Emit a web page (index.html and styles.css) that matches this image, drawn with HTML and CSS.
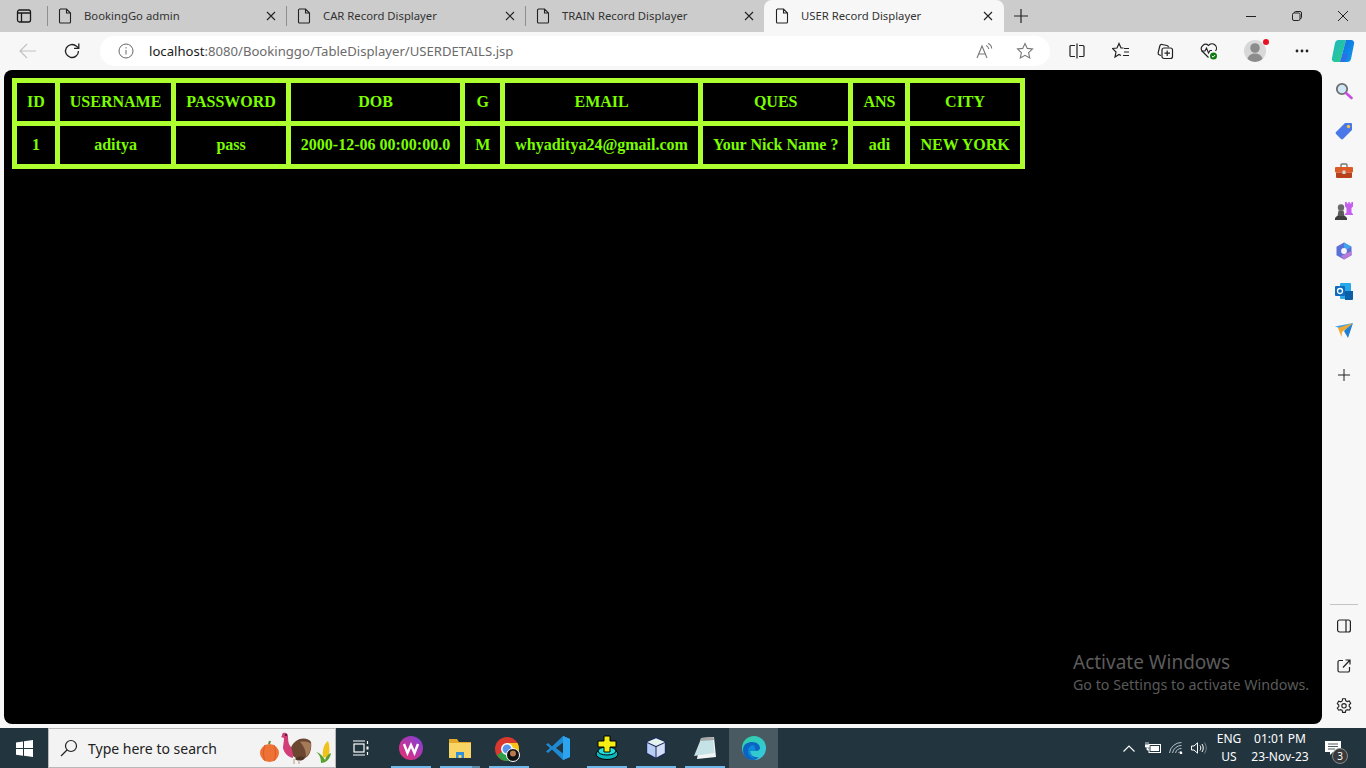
FILE: index.html
```html
<!DOCTYPE html>
<html>
<head>
<title>USER Record Displayer</title>
<meta name="viewport" content="width=device-width, initial-scale=1.0">
<link rel="stylesheet" href="styles.css">
</head>
<body>

<!-- tab strip -->
<div class="tabstrip">
  <div class="strip-toggle">
    <svg width="16" height="16" viewBox="0 0 16 16" fill="none" stroke="#1a1a1a" stroke-width="1.3"><rect x="1.5" y="2" width="13" height="12" rx="2"/><path d="M5.5 5v9M1.5 5h13" /></svg>
  </div>
  <div class="tab-sep"></div>
  <div class="tab">
    <svg class="doc" width="14" height="16" viewBox="0 0 14 16" fill="none" stroke="#222" stroke-width="1.1"><path d="M2 1h6.5L12.500 5v9a1 1 0 0 1-1 1h-9a1 1 0 0 1-1-1V2a1 1 0 0 1 1-1zM8.500 1v4h4"/></svg>
    <span class="tab-title">BookingGo admin</span>
    <span class="tab-close"><svg width="10" height="10" viewBox="0 0 10 10" stroke="#222" stroke-width="1.100"><path d="M1 1l8 8M9 1l-8 8"/></svg></span>
  </div>
  <div class="tab-sep"></div>
  <div class="tab">
    <svg class="doc" width="14" height="16" viewBox="0 0 14 16" fill="none" stroke="#222" stroke-width="1.1"><path d="M2 1h6.5L12.500 5v9a1 1 0 0 1-1 1h-9a1 1 0 0 1-1-1V2a1 1 0 0 1 1-1zM8.500 1v4h4"/></svg>
    <span class="tab-title">CAR Record Displayer</span>
    <span class="tab-close"><svg width="10" height="10" viewBox="0 0 10 10" stroke="#222" stroke-width="1.100"><path d="M1 1l8 8M9 1l-8 8"/></svg></span>
  </div>
  <div class="tab-sep"></div>
  <div class="tab">
    <svg class="doc" width="14" height="16" viewBox="0 0 14 16" fill="none" stroke="#222" stroke-width="1.1"><path d="M2 1h6.5L12.500 5v9a1 1 0 0 1-1 1h-9a1 1 0 0 1-1-1V2a1 1 0 0 1 1-1zM8.500 1v4h4"/></svg>
    <span class="tab-title">TRAIN Record Displayer</span>
    <span class="tab-close"><svg width="10" height="10" viewBox="0 0 10 10" stroke="#222" stroke-width="1.100"><path d="M1 1l8 8M9 1l-8 8"/></svg></span>
  </div>
  <div class="tab active">
    <svg class="doc" width="14" height="16" viewBox="0 0 14 16" fill="none" stroke="#222" stroke-width="1.1"><path d="M2 1h6.5L12.500 5v9a1 1 0 0 1-1 1h-9a1 1 0 0 1-1-1V2a1 1 0 0 1 1-1zM8.500 1v4h4"/></svg>
    <span class="tab-title">USER Record Displayer</span>
    <span class="tab-close"><svg width="10" height="10" viewBox="0 0 10 10" stroke="#222" stroke-width="1.100"><path d="M1 1l8 8M9 1l-8 8"/></svg></span>
  </div>
  <div class="new-tab">
    <svg width="14" height="14" viewBox="0 0 14 14" stroke="#222" stroke-width="1.200"><path d="M7 0v14M0 7h14"/></svg>
  </div>
  <div class="win-controls">
    <span class="win-btn"><svg width="10" height="10" viewBox="0 0 10 10" stroke="#222"><path d="M0 5.500h10"/></svg></span>
    <span class="win-btn"><svg width="10" height="10" viewBox="0 0 10 10" fill="none" stroke="#222"><rect x="0.500" y="2" width="7.500" height="7.500" rx="1.500"/><path d="M2.500 2V1.500a1 1 0 0 1 1-1H8a1.500 1.500 0 0 1 1.500 1.500v4.500a1 1 0 0 1-1 1H8"/></svg></span>
    <span class="win-btn"><svg width="10" height="10" viewBox="0 0 10 10" stroke="#222"><path d="M0 0l10 10M10 0L0 10"/></svg></span>
  </div>
</div>

<!-- address bar -->
<div class="toolbar">
  <div class="nav-btn">
    <svg width="18" height="16" viewBox="0 0 18 16" fill="none" stroke="#c2c2c2" stroke-width="1.200"><path d="M17 8H1M8 1L1 8l7 7"/></svg>
  </div>
  <div class="nav-btn">
    <svg width="18" height="18" viewBox="0 0 18 18" fill="none" stroke="#222" stroke-width="1.300"><path d="M15.500 9a6.500 6.500 0 1 1-2-4.700L15.500 6"/><path d="M15.800 1.500V6.300H11"/></svg>
  </div>
  <div class="address">
    <svg class="info" width="16" height="16" viewBox="0 0 16 16" fill="none" stroke="#666"><circle cx="8" cy="8" r="7"/><path d="M8 7v4.500M8 4.200v1.300"/></svg>
    <span class="url"><span class="host">localhost</span>:8080/Bookinggo/TableDisplayer/USERDETAILS.jsp</span>
    <svg class="read" width="18" height="16" viewBox="0 0 18 16" fill="none" stroke="#777" stroke-width="1.100"><path d="M1 15L6 3l5 12M2.800 11h6.500M10 2.500c1.500.5 2.500 2 2.700 3.500M12 .5c2.200.7 3.500 2.800 3.700 5"/></svg>
    <svg class="fav" width="18" height="18" viewBox="0 0 18 18" fill="none" stroke="#777" stroke-width="1.100"><path d="M9 1.500l2.300 4.900 5.200.6-3.900 3.600 1.100 5.300L9 13.300l-4.700 2.600 1.100-5.300L1.500 7l5.200-.6z"/></svg>
  </div>
  <div class="tool-btn">
    <svg width="16" height="16" viewBox="0 0 16 16" fill="none" stroke="#222" stroke-width="1.200"><path d="M6 2.500H2a1 1 0 0 0-1 1v9a1 1 0 0 0 1 1h4M10 2.500h4a1 1 0 0 1 1 1v9a1 1 0 0 1-1 1h-4M8 0.500v15"/></svg>
  </div>
  <div class="tool-btn">
    <svg width="18" height="18" viewBox="0 0 18 18" fill="none" stroke="#222" stroke-width="1.200"><path d="M11.500 6H9L7 1.500 5 6l-4.500.5L4 10l-1 5 4-2.500 2 1"/><path d="M12 6.500h5M12 10h5M11 13.500h6"/></svg>
  </div>
  <div class="tool-btn">
    <svg width="18" height="18" viewBox="0 0 18 18" fill="none" stroke="#222" stroke-width="1.200"><path d="M5 13.500l-1.500-.5a2 2 0 0 1-1.300-2.400L3.800 4A2 2 0 0 1 6 2.500l5 1a2 2 0 0 1 1.500 1.800"/><rect x="6" y="6" width="10.500" height="10.500" rx="2"/><path d="M11.200 8.500v5.500M8.500 11.200H14"/></svg>
  </div>
  <div class="tool-btn">
    <svg width="20" height="20" viewBox="0 0 20 20" fill="none"><path d="M9.500 16.500L3 10a4.300 4.300 0 0 1 6.500-5.500A4.300 4.300 0 0 1 16.500 10" stroke="#222" stroke-width="1.200"/><path d="M2.500 10H6l1.500-3 2 5 1.500-2.500h2" stroke="#222" stroke-width="1.100"/><circle cx="14.500" cy="15" r="3.500" fill="#107c10"/><path d="M12.900 15l1.200 1.200 2-2.200" stroke="#fff"/></svg>
  </div>
  <div class="tool-btn avatar-btn">
    <span class="avatar">
      <svg width="22" height="22" viewBox="0 0 22 22"><circle cx="11" cy="11" r="11" fill="#d8d8d8"/><circle cx="11" cy="8" r="4.800" fill="#8c8c8c"/><path d="M3.500 19c1-4 4-5.500 7.500-5.500s6.500 1.500 7.500 5.500a11 11 0 0 1-15 0z" fill="#8c8c8c"/></svg>
      <span class="avatar-dot"></span>
    </span>
  </div>
  <div class="tool-btn dots-btn">
    <svg width="14" height="4" viewBox="0 0 14 4" fill="#222"><circle cx="2" cy="2" r="1.400"/><circle cx="7" cy="2" r="1.400"/><circle cx="12" cy="2" r="1.400"/></svg>
  </div>
  <div class="tool-btn copilot-btn">
    <svg width="24" height="24" viewBox="0 0 24 24"><defs><linearGradient id="cpA" x1="0" y1="0" x2="1" y2="1"><stop offset="0" stop-color="#1fb6c9"/><stop offset="1" stop-color="#2bd07f"/></linearGradient><linearGradient id="cpB" x1="0" y1="0" x2="1" y2="1"><stop offset="0" stop-color="#1668e3"/><stop offset="1" stop-color="#0b9fe8"/></linearGradient></defs><path d="M7 1h8L9 23H4a3 3 0 0 1-3-4L4 4a3.500 3.500 0 0 1 3-3z" fill="url(#cpA)"/><path d="M17 23H9l6-22h5a3 3 0 0 1 3 4l-3 15a3.500 3.500 0 0 1-3 3z" fill="url(#cpB)"/><path d="M9 23l3-8h5l-2 6a3 3 0 0 1-3 2z" fill="#2f6fe6"/></svg>
  </div>
</div>

<!-- page and side panel -->
<div class="workspace">
  <div class="viewport">
    <table class="records">
      <tr>
        <th>ID</th><th>USERNAME</th><th>PASSWORD</th><th>DOB</th><th>G</th><th>EMAIL</th><th>QUES</th><th>ANS</th><th>CITY</th>
      </tr>
      <tr>
        <td>1</td><td>aditya</td><td>pass</td><td>2000-12-06 00:00:00.0</td><td>M</td><td>whyaditya24@gmail.com</td><td>Your Nick Name ?</td><td>adi</td><td>NEW YORK</td>
      </tr>
    </table>
    <div class="activate">
      <div class="activate-title">Activate Windows</div>
      <div class="activate-sub">Go to Settings to activate Windows.</div>
    </div>
  </div>

  <div class="sidebar">
    <div class="side-btn">
      <svg width="18" height="18" viewBox="0 0 18 18" fill="none"><circle cx="7" cy="7" r="5.200" fill="#cfe6f5" stroke="#6e6e6e" stroke-width="1.800"/><path d="M11 11l5.500 5" stroke="#c64fe0" stroke-width="2.600" stroke-linecap="round"/></svg>
    </div>
    <div class="side-btn">
      <svg width="18" height="18" viewBox="0 0 18 18"><path d="M10 1h6a1 1 0 0 1 1 1v6L8 17a1.500 1.500 0 0 1-2 0L1 12a1.500 1.500 0 0 1 0-2z" fill="#4a78e8"/><circle cx="13.500" cy="4.500" r="1.700" fill="#f4c542"/></svg>
    </div>
    <div class="side-btn">
      <svg width="18" height="16" viewBox="0 0 18 16"><path d="M6 4V2a1 1 0 0 1 1-1h4a1 1 0 0 1 1 1v2" fill="none" stroke="#777" stroke-width="1.400"/><rect x="0" y="4" width="18" height="5.500" rx="1" fill="#dc5a25"/><path d="M1 9.500h16V14a1 1 0 0 1-1 1H2a1 1 0 0 1-1-1z" fill="#b8401a"/><rect x="7.500" y="7.500" width="3" height="3.500" fill="#d9d9d9"/></svg>
    </div>
    <div class="side-btn">
      <svg width="18" height="18" viewBox="0 0 18 18"><path d="M10 0h1.800v1.500h1.600V0h1.400v1.500h1.600V0H18v4.500L16.500 6v4.500L18 12v1h-8v-1l1.500-1.500V6L10 4.500z" fill="#c65ff0"/><circle cx="6" cy="5.500" r="3.200" fill="#6a6a6a"/><path d="M3.500 8.500h5l1 5.500h-7z" fill="#5a5a5a"/><path d="M0 18v-2l2-2h8l2 2v2z" fill="#3e3e3e"/></svg>
    </div>
    <div class="side-btn">
      <svg width="18" height="18" viewBox="0 0 18 18"><path d="M9 .5l7.500 4.200v8.600L9 17.500 1.500 13.300V4.700z" fill="#5b6fd8"/><path d="M9 .5l7.500 4.200L12 7.500 9 5.500z" fill="#41a5ee"/><path d="M16.500 9v4.300L9 17.500 6 14z" fill="#b77ad6"/><circle cx="9" cy="9" r="2.900" fill="#f5f5f5"/></svg>
    </div>
    <div class="side-btn">
      <svg width="18" height="17" viewBox="0 0 18 17"><rect x="5" y="0" width="11" height="16" rx="1" fill="#28a8ea"/><path d="M10 8h8v8a1 1 0 0 1-1 1H10z" fill="#0a5ea8"/><rect x="0" y="3" width="10" height="10" rx="1" fill="#0f6cbd"/><circle cx="5" cy="8" r="2.500" fill="none" stroke="#fff" stroke-width="1.300"/></svg>
    </div>
    <div class="side-btn">
      <svg width="18" height="16" viewBox="0 0 18 16"><path d="M0 3.500L18 0l-8 7z" fill="#3ea0e8"/><path d="M18 0l-5 15-4-7z" fill="#1f7fd0"/><path d="M3 5l15-5L7 9l-.5 5z" fill="#f0a92e"/></svg>
    </div>
    <div class="side-btn side-add">
      <svg width="12" height="12" viewBox="0 0 12 12" stroke="#222"><path d="M6 0v12M0 6h12"/></svg>
    </div>
    <div class="side-foot">
      <div class="side-rule"></div>
      <div class="side-btn">
        <svg width="14" height="14" viewBox="0 0 14 14" fill="none" stroke="#222" stroke-width="1.200"><rect x="0.600" y="1" width="12.800" height="12" rx="2"/><path d="M9 1v12"/></svg>
      </div>
      <div class="side-btn">
        <svg width="14" height="14" viewBox="0 0 14 14" fill="none" stroke="#222" stroke-width="1.200"><path d="M6 1.500H2.500a1.500 1.500 0 0 0-1.500 1.500v8.500A1.500 1.500 0 0 0 2.500 13H11a1.500 1.500 0 0 0 1.500-1.500V8M6 8.500L13 1M8.500 1H13v4.500"/></svg>
      </div>
      <div class="side-btn">
        <svg width="16" height="16" viewBox="0 0 16 16" fill="none" stroke="#222" stroke-width="1.100"><path d="M6.600.8h2.800l.4 2 1.500.8 2-.6 1.400 2.400-1.500 1.400v1.600l1.500 1.400-1.400 2.400-2-.6-1.500.8-.4 2H6.600l-.4-2-1.500-.8-2 .6L1.300 10l1.500-1.400V7L1.300 5.600l1.400-2.400 2 .6 1.500-.8z"/><circle cx="8" cy="7.800" r="2.200"/></svg>
      </div>
    </div>
  </div>
</div>

<!-- windows taskbar -->
<div class="taskbar">
  <div class="start">
    <svg width="17" height="17" viewBox="0 0 17 17" fill="#fff"><path d="M0 2.400l7-1v6.700H0zM8 1.200L17 0v8.100H8zM0 9h7v6.700l-7-1zM8 9h9v8l-9-1.200z"/></svg>
  </div>
  <div class="search">
    <svg width="18" height="18" viewBox="0 0 18 18" fill="none" stroke="#222" stroke-width="1.200"><circle cx="11" cy="7" r="5.500"/><path d="M7 11l-6 6"/></svg>
    <span class="search-text">Type here to search</span>
    <svg class="search-art" width="74" height="36" viewBox="0 0 74 36">
      <!-- pumpkin -->
      <ellipse cx="9.500" cy="23" rx="9.500" ry="9" fill="#ee7135"/><path d="M5 15c-2 5-2 11 0 16M14 15c2 5 2 11 0 16" stroke="#d85c26" fill="none"/><path d="M9 14l1-3" stroke="#5d8a2f" stroke-width="2"/>
      <!-- turkey -->
      <path d="M36 11c5-4 13-3 15 1 1 6-1 14-6 16-6 2-13 0-14-6-1-4 1-8 5-11z" fill="#6b4630"/>
      <path d="M40 12c4-1 10 0 11 2 0 5-2 11-5 13 0-6-2-11-6-15z" fill="#a57a58"/>
      <path d="M29 14c-1-3-1-6-1-8 0-3-3-4-5-3-1 1-1 2-1 3l-1 1 3 1c0 4-1 7-1 10 1 5 5 9 10 10 0-6-1-10-4-14z" fill="#d23f78"/>
      <circle cx="26" cy="5" r="1" fill="#222"/>
      <path d="M35 29c3-3 7-3 10-1-2 3-7 4-10 1z" fill="#4f3324"/>
      <path d="M34 29v5M39 30v4" stroke="#c8b8a8" stroke-width="1.500"/>
      <!-- corn -->
      <path d="M63 27c-1-7 1-13 5-16 2 5 2 12 0 17z" fill="#f1c21c"/><path d="M56 22c3 2 5 5 5 11 4 0 9-3 10-10-3 1-5 4-6 7-2-4-5-7-9-8z" fill="#5aa02c"/>
    </svg>
  </div>
  <div class="task-btn task-view">
    <svg width="16" height="16" viewBox="0 0 16 16" fill="none" stroke="#fff" stroke-width="1.200"><rect x="1" y="4" width="10" height="8"/><path d="M0 1h12M0 15h12M14.500 1v3M14.500 12v3"/><path d="M14.500 6.500v3" stroke-width="2"/></svg>
  </div>
  <div class="task-btn running">
    <svg width="24" height="24" viewBox="0 0 24 24"><defs><linearGradient id="wpsG" x1="0" y1="1" x2="1" y2="0"><stop offset="0" stop-color="#ef2f6b"/><stop offset="1" stop-color="#7b3fe0"/></linearGradient></defs><circle cx="12" cy="12" r="12" fill="url(#wpsG)"/><path d="M5 8l3.500 9 3.500-8 3.500 8L19 8" fill="none" stroke="#fff" stroke-width="2.400"/></svg>
  </div>
  <div class="task-btn running grouped">
    <svg width="24" height="20" viewBox="0 0 24 20"><path d="M1 1h8l2 3h12v3H1z" fill="#e3a92a"/><rect x="1" y="5" width="22" height="15" fill="#f9d565"/><path d="M8 20v-6h8v6h-2.500v-3h-3v3z" fill="#2f8fd8"/></svg>
  </div>
  <div class="task-btn running">
    <svg width="28" height="28" viewBox="0 -3 28 28"><circle cx="12" cy="12" r="12" fill="#d8382d"/><path d="M12 12L2 18a12 12 0 0 0 10 6c2 0 4-.5 5-1z" fill="#2d9f49"/><path d="M12 6h10.500A12 12 0 0 1 24 12c0 3-1 5-2 6.500L16 12z" fill="#f5c518"/><circle cx="12" cy="12" r="5.200" fill="#5a93ea" stroke="#fff" stroke-width="1.500"/><circle cx="18" cy="18" r="6.500" fill="#111" stroke="#fff"/><circle cx="18" cy="16.500" r="3" fill="#b97a50"/></svg>
  </div>
  <div class="task-btn">
    <svg width="24" height="24" viewBox="0 0 24 24"><path d="M17 0l7 3v18l-7 3L6 13.500 2 17 0 15.500 4 12 0 8.500 2 7l4 3.500z" fill="#1f8ad2"/><path d="M17 0l7 3v18l-7 3z" fill="#2ba5ef"/><path d="M17 6.500L10 12l7 5.500z" fill="#22343e"/></svg>
  </div>
  <div class="task-btn running">
    <svg width="24" height="26" viewBox="0 0 24 26"><ellipse cx="12" cy="19" rx="11" ry="5.500" fill="#0bb5bd" stroke="#000"/><ellipse cx="12" cy="16" rx="9" ry="4" fill="#25e0dc" stroke="#000"/><path d="M9 1h6v5h6v6h-6v5H9v-5H3V6h6z" fill="#f6ee12" stroke="#000"/></svg>
  </div>
  <div class="task-btn running">
    <svg width="22" height="24" viewBox="0 0 22 24"><path d="M11 1l10 4.500v12L11 23 1 17.500v-12z" fill="#1d2a5c"/><path d="M11 2.200l8.800 3.800L11 10 2.200 6z" fill="#e4f2f0"/><path d="M2.200 7l8.300 4v10.500L2.200 17z" fill="#b7cdf2"/><path d="M19.800 7l-8.300 4v10.500l8.300-4.500z" fill="#d3def5"/></svg>
  </div>
  <div class="task-btn running">
    <svg width="24" height="24" viewBox="0 0 24 24"><path d="M8 2l13-1 2 20-19 2z" fill="#f2f5f5"/><path d="M7.500 4L20 3l1.500 14L1 20z" fill="#c5e2e6"/><path d="M8 2l12.500-1 .5 3L7.500 5z" fill="#a8a8a8"/></svg>
  </div>
  <div class="task-btn current">
    <svg width="24" height="24" viewBox="0 0 24 24"><defs><linearGradient id="edgeG" x1="0" y1="0" x2="1" y2="1"><stop offset="0" stop-color="#2fd0a0"/><stop offset="1" stop-color="#35c6e8"/></linearGradient></defs><circle cx="12" cy="12" r="12" fill="url(#edgeG)"/><path d="M1 14C1 8 6 6 10 6c5 0 8 3 8 6 0 2-2 3-4 3H8c0 4 4 7 9 6-2 2-4 3-6 3C5 24 1 20 1 14z" fill="#0d63c4"/><path d="M12 9c-4 0-6 3-6 6 0 4 3 7 7 8-3-2-5-5-5-8h6c-1-2-1-4-2-6z" fill="#0c8ad8"/></svg>
  </div>
  <div class="tray">
    <svg class="tray-icon tray-caret" width="12" height="7" viewBox="0 0 12 7" fill="none" stroke="#fff" stroke-width="1.100"><path d="M.5 6.500L6 1l5.500 5.500"/></svg>
    <svg class="tray-icon" width="16" height="12" viewBox="0 0 16 12"><rect x="4" y="2.500" width="11.500" height="8" fill="none" stroke="#fff"/><rect x="5.500" y="4" width="8.500" height="5" fill="#fff"/><path d="M1 0v3M3 0v3M0 3h4v2H0zM2 5v3h2" fill="#fff" stroke="#fff" stroke-width=".8"/></svg>
    <svg class="tray-icon" width="14" height="12" viewBox="0 0 14 12" fill="none" stroke="#b9c2c7"><path d="M.5 11a12 12 0 0 1 12-10.500M3.500 11a9 9 0 0 1 9-7.500M6.500 11a6 6 0 0 1 6-4.500M9.500 11a3 3 0 0 1 3-1.500"/><circle cx="12" cy="11" r="1.300" fill="#fff" stroke="none"/></svg>
    <svg class="tray-icon" width="16" height="12" viewBox="0 0 16 12" fill="none" stroke="#fff"><path d="M.5 4h2.500L6.500 .8v10.400L3 8H.5zM9 3.500c1 1.500 1 3.500 0 5M11 2c1.700 2.500 1.700 5.500 0 8"/><path d="M13.500.5c2.300 3.500 2.300 7.500 0 11" stroke="#78848a"/></svg>
    <div class="tray-lang"><span>ENG</span><span>US</span></div>
    <div class="tray-clock"><span>01:01 PM</span><span>23-Nov-23</span></div>
    <div class="notify">
      <svg width="16" height="15" viewBox="0 0 16 15"><path d="M0 0h16v11h-8l-3 3v-3H0z" fill="#fff"/><path d="M3 3h10M3 5.500h10M3 8h7" stroke="#22343e" stroke-width=".8"/></svg>
      <span class="notify-badge">3</span>
    </div>
  </div>
</div>

</body>
</html>
```

FILE: styles.css
```css
html, body {
  margin: 0;
  padding: 0;
  height: 100%;
}
body {
  width: 1366px;
  height: 768px;
  overflow: hidden;
  display: flex;
  flex-direction: column;
  background-color: #f7f7f7;
  font-family: "Noto Sans", "Open Sans", sans-serif;
}

/* tab strip */
.tabstrip {
  display: flex;
  align-items: center;
  height: 32px;
  background-color: #cccccc;
  flex: none;
}
.strip-toggle {
  width: 47px;
  display: flex;
  justify-content: center;
}
.tab-sep {
  width: 1px;
  height: 20px;
  background-color: #8f8f8f;
  flex: none;
}
.tab {
  width: 238px;
  height: 32px;
  display: flex;
  align-items: center;
  padding-left: 10px;
  box-sizing: border-box;
  flex: none;
}
.tab .doc {
  flex: none;
}
.tab-title {
  margin-left: 12px;
  padding-bottom: 2px;
  font-size: 11.3px;
  color: #333;
  white-space: nowrap;
}
.tab-close {
  margin-left: auto;
  margin-right: 10px;
  display: flex;
}
.tab.active {
  width: 240px;
  background-color: #f7f7f7;
  border-radius: 8px 8px 0 0;
  padding-left: 11px;
}
.tab.active .tab-close {
  margin-right: 11px;
}
.new-tab {
  width: 34px;
  display: flex;
  justify-content: center;
}
.win-controls {
  margin-left: auto;
  display: flex;
}
.win-btn {
  width: 46px;
  display: flex;
  justify-content: center;
}

/* address bar */
.toolbar {
  height: 38px;
  display: flex;
  align-items: center;
  padding-left: 6px;
  box-sizing: border-box;
  flex: none;
}
.nav-btn {
  width: 44px;
  display: flex;
  justify-content: center;
}
.address {
  width: 950px;
  height: 30px;
  margin-left: 6px;
  margin-right: 5px;
  background-color: #fff;
  border-radius: 15px;
  display: flex;
  align-items: center;
  padding-left: 18px;
  box-sizing: border-box;
}
.url {
  margin-left: 15px;
  font-size: 13.13px;
  color: #6b6b6b;
  white-space: nowrap;
}
.host {
  color: #1a1a1a;
}
.read {
  margin-left: auto;
}
.fav {
  margin-left: 22px;
  margin-right: 16px;
}
.tool-btn {
  width: 44px;
  display: flex;
  justify-content: center;
  align-items: center;
}
.avatar-btn {
  width: 48px;
}
.dots-btn {
  width: 46px;
}
.copilot-btn {
  width: 36px;
}
.avatar {
  position: relative;
  display: flex;
}
.avatar-dot {
  position: absolute;
  top: -1px;
  right: -3px;
  width: 6px;
  height: 6px;
  border-radius: 50%;
  background-color: #e81123;
}

/* page and side panel */
.workspace {
  display: flex;
  height: 658px;
  flex: none;
}
.viewport {
  position: relative;
  width: 1318px;
  height: 654px;
  margin-left: 4px;
  background-color: #000;
  border-radius: 8px;
  padding: 8px;
  box-sizing: border-box;
}
.records {
  border-collapse: collapse;
  border: 5px solid #adff2f;
  font-family: "Liberation Serif", "Times New Roman", serif;
  font-size: 16px;
  font-weight: bold;
  color: #7cfc00;
}
.records th, .records td {
  border: 5px solid #adff2f;
  padding: 10px;
  text-align: center;
  white-space: nowrap;
}
.activate {
  position: absolute;
  left: 1069px;
  top: 579px;
}
.activate-title {
  font-size: 19px;
  line-height: 26px;
  color: #5c5c5c;
}
.activate-sub {
  font-size: 14.25px;
  line-height: 19px;
  color: #5a5a5a;
}
.sidebar {
  width: 44px;
  display: flex;
  flex-direction: column;
  padding-top: 1px;
  box-sizing: border-box;
}
.side-btn {
  height: 40px;
  display: flex;
  justify-content: center;
  align-items: center;
  flex: none;
}
.side-add {
  margin-top: 4px;
}
.side-foot {
  margin-top: auto;
  padding-bottom: 2px;
}
.side-rule {
  height: 1px;
  margin: 0 8px 1px;
  background-color: #c4c4c4;
}

/* windows taskbar */
.taskbar {
  height: 40px;
  display: flex;
  align-items: stretch;
  background-color: #22343e;
  flex: none;
}
.start {
  width: 48px;
  display: flex;
  justify-content: center;
  align-items: center;
}
.search {
  width: 288px;
  background-color: #f3f3f3;
  border: 1px solid #b8b8b8;
  box-sizing: border-box;
  display: flex;
  align-items: center;
  padding-left: 11px;
}
.search-text {
  margin-left: 10px;
  font-size: 14px;
  color: #222;
  white-space: nowrap;
}
.search-art {
  margin-left: auto;
  margin-right: 1px;
}
.task-btn {
  width: 49px;
  display: flex;
  justify-content: center;
  align-items: center;
  box-sizing: border-box;
}
.task-btn.task-view {
  width: 50px;
}
.task-btn.running {
  background: linear-gradient(#70b8ea, #70b8ea) center bottom / 40px 2px no-repeat;
}
.task-btn.grouped {
  background-image: linear-gradient(to right, #70b8ea 32px, #5b8aa6 32px);
}
.task-btn.current {
  background-color: #4a5a63;
}
.tray {
  margin-left: auto;
  display: flex;
  align-items: center;
  color: #fff;
  font-size: 12px;
}
.tray-icon {
  margin-right: 8px;
}
.tray-caret {
  margin-right: 10px;
}
.tray-lang, .tray-clock {
  display: flex;
  flex-direction: column;
  align-items: center;
  line-height: 18px;
}
.tray-lang {
  margin-left: -2px;
  width: 32px;
}
.tray-clock {
  width: 64px;
  margin-left: 3px;
}
.notify {
  position: relative;
  width: 42px;
  margin-right: 12px;
  display: flex;
  justify-content: center;
}
.notify-badge {
  position: absolute;
  left: 20px;
  top: 7px;
  width: 16px;
  height: 16px;
  border-radius: 50%;
  background-color: #3a3a3a;
  border: 1px solid #8a8a8a;
  box-sizing: border-box;
  font-size: 10px;
  line-height: 14px;
  text-align: center;
}
```
